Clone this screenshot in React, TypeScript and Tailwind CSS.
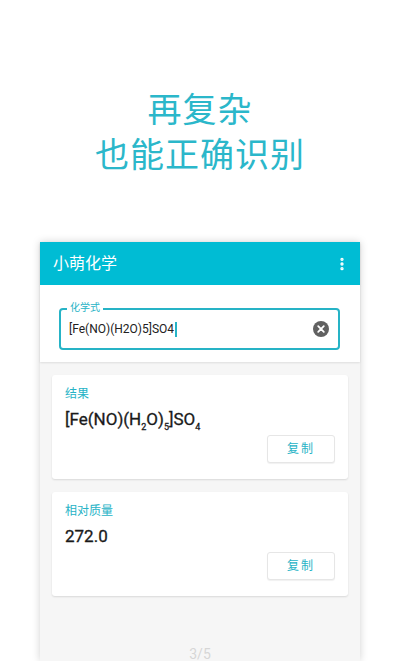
import { EllipsisVertical } from "lucide-react";

const font = "font-['Roboto','Noto_Sans_CJK_SC',sans-serif]";

function Sub({ children }: { children: React.ReactNode }) {
  return <sub className="text-[9px] align-[-3px]">{children}</sub>;
}

function ResultCard({ label, children }: { label: string; children: React.ReactNode }) {
  return (
    <div className="bg-white rounded-[3px] shadow-[0_1px_2px_rgba(0,0,0,0.12)] h-[104px] px-[13px] pt-[11px] flex flex-col">
      <div className="text-[12px] leading-[16px] text-[#26b3c6]">{label}</div>
      <div className="text-[17px] leading-[22px] text-[#1a1a1a] [-webkit-text-stroke:0.3px_#1a1a1a] mt-[6px]">{children}</div>
      <div className="flex justify-end mt-[5px]">
        <button className="w-[68px] h-[28px] bg-white rounded-[3px] border border-[#e6e6e6] shadow-[0_1px_1px_rgba(0,0,0,0.06)] text-[12px] text-[#26b3c6] tracking-[2px]">
          复制
        </button>
      </div>
    </div>
  );
}

export default function App() {
  return (
    <div className={`w-[400px] h-[661px] bg-white overflow-hidden flex flex-col items-center ${font}`}>
      <div className="pt-[88px] text-center text-[34px] leading-[45px] text-[#2bb7ca] tracking-[1px]">
        <div>再复杂</div>
        <div>也能正确识别</div>
      </div>

      <div className="mt-[64px] w-[320px] flex-1 flex flex-col bg-[#f6f6f6] shadow-[0_0_8px_rgba(0,0,0,0.18)]">
        <div className="h-[43px] bg-[#00bcd4] flex items-center justify-between pl-[13px] pr-[10px] shadow-[0_1px_2px_rgba(0,0,0,0.15)]">
          <span className="text-white text-[16px]">小萌化学</span>
          <EllipsisVertical size={16} strokeWidth={3} className="text-white" />
        </div>

        <div className="bg-white pt-[23px] pb-[12px] pl-[19px] pr-[20px] shadow-[0_1px_2px_rgba(0,0,0,0.1)]">
          <div className="relative h-[42px] border-2 border-[#26b3c6] rounded-[4px] flex items-center pl-[8px] pr-[9px]">
            <span className="absolute -top-[8px] left-[6px] bg-white px-[3px] text-[10px] leading-[12px] text-[#26b3c6]">化学式</span>
            <span className="flex-1 text-[12px] text-[#212121] flex items-center">
              [Fe(NO)(H2O)5]SO4
              <span className="inline-block w-[1.5px] h-[15px] bg-[#26b3c6] ml-[1px]" />
            </span>
            <svg width="16" height="16" viewBox="0 0 16 16">
              <circle cx="8" cy="8" r="8" fill="#616161" />
              <path d="M5.2 5.2 L10.8 10.8 M10.8 5.2 L5.2 10.8" stroke="#fff" strokeWidth="1.8" strokeLinecap="round" />
            </svg>
          </div>
        </div>

        <div className="px-3 pt-[13px] flex flex-col gap-[13px]">
          <ResultCard label="结果">
            [Fe(NO)(H<Sub>2</Sub>O)<Sub>5</Sub>]SO<Sub>4</Sub>
          </ResultCard>
          <ResultCard label="相对质量">272.0</ResultCard>
        </div>

        <div className="mt-auto text-center text-[14px] leading-[14px] text-[#d6d6d6]">3/5</div>
      </div>
    </div>
  );
}
